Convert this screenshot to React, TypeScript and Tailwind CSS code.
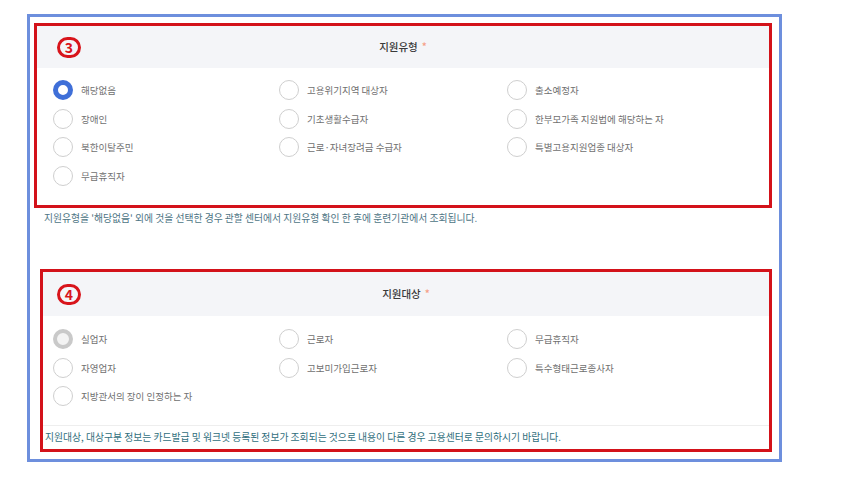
import React from 'react'

type Opt = { label: string; state?: 'checked' | 'disabled' }

const TYPE_OPTIONS: Opt[] = [
  { label: '해당없음', state: 'checked' },
  { label: '고용위기지역 대상자' },
  { label: '출소예정자' },
  { label: '장애인' },
  { label: '기초생활수급자' },
  { label: '한부모가족 지원법에 해당하는 자' },
  { label: '북한이탈주민' },
  { label: '근로·자녀장려금 수급자' },
  { label: '특별고용지원업종 대상자' },
  { label: '무급휴직자' },
]

const TARGET_OPTIONS: Opt[] = [
  { label: '실업자', state: 'disabled' },
  { label: '근로자' },
  { label: '무급휴직자' },
  { label: '자영업자' },
  { label: '고보미가입근로자' },
  { label: '특수형태근로종사자' },
  { label: '지방관서의 장이 인정하는 자' },
]

function Radio({ state }: { state?: Opt['state'] }) {
  if (state === 'checked') {
    return <span className="w-[20px] h-[20px] rounded-full border-[5px] border-[#3f6fd8] bg-white flex-shrink-0" />
  }
  if (state === 'disabled') {
    return <span className="w-[20px] h-[20px] rounded-full border-[4px] border-[#c9c9c9] bg-[#f3f3f3] flex-shrink-0" />
  }
  return <span className="w-[20px] h-[20px] rounded-full border-[1.5px] border-[#cfcfcf] bg-white flex-shrink-0" />
}

function Options({ items }: { items: Opt[] }) {
  return (
    <div className="grid grid-cols-[226px_228px_1fr]">
      {items.map((o) => (
        <div key={o.label} className="flex items-center gap-2 h-[28.5px]">
          <Radio state={o.state} />
          <span className="text-[9.5px] text-[#707070] whitespace-nowrap">{o.label}</span>
        </div>
      ))}
    </div>
  )
}

// circled step number, drawn as a ring around a real digit
function StepNo({ n }: { n: string }) {
  return (
    <span className="w-[24px] h-[21px] rounded-full border-[3px] border-[#d8141b] flex items-center justify-center text-[14px] font-bold text-[#d8141b] leading-none">
      {n}
    </span>
  )
}

function Header({ n, title, pad, h }: { n: string; title: string; pad: string; h: string }) {
  return (
    <div className={`grid grid-cols-[1fr_auto_1fr] items-center bg-[#f4f5f8] ${h} ${pad}`}>
      <StepNo n={n} />
      <span className="flex items-center gap-[4px] text-[10.5px] text-[#3a3a3a] font-medium">
        {title}
        <span className="text-[#f5a08a]">*</span>
      </span>
      <span />
    </div>
  )
}

export default function App() {
  return (
    <div
      className="w-[857px] h-[481px] bg-white pl-[27px] pt-[14px]"
      style={{ fontFamily: '"Noto Sans CJK KR", "Noto Sans", sans-serif' }}
    >
      <div className="w-[755px] h-[448px] border-[3px] border-[#6d8fdd] flex flex-col">
        {/* ③ 지원유형 */}
        <div className="ml-[4px] mt-[6px] w-[738px] border-[3px] border-[#d3121a] bg-white">
          <Header n="3" title="지원유형" pad="pl-[20px] pr-[20px]" h="h-[42px]" />
          <div className="pl-[16px] pt-[8px] pb-[15px]">
            <Options items={TYPE_OPTIONS} />
          </div>
        </div>
        <p className="ml-[14px] mt-[3px] text-[9.8px] leading-[14px] text-[#4d7484] whitespace-nowrap">
          지원유형을 '해당없음' 외에 것을 선택한 경우 관할 센터에서 지원유형 확인 한 후에 훈련기관에서 조회됩니다.
        </p>

        {/* ④ 지원대상 */}
        <div className="ml-[10px] mt-[44px] w-[732px] border-[3px] border-[#d3121a] bg-white">
          <Header n="4" title="지원대상" pad="pl-[14px] pr-[14px]" h="h-[44px]" />
          <div className="pl-[10px] pt-[9px] pb-[14px]">
            <Options items={TARGET_OPTIONS} />
          </div>
          <div className="border-t border-[#eeeeee] h-[24px] flex items-center pl-[2px]">
            <p className="text-[9.8px] text-[#2f6e7c] whitespace-nowrap">
              지원대상, 대상구분 정보는 카드발급 및 워크넷 등록된 정보가 조회되는 것으로 내용이 다른 경우 고용센터로 문의하시기 바랍니다.
            </p>
          </div>
        </div>
      </div>
    </div>
  )
}
